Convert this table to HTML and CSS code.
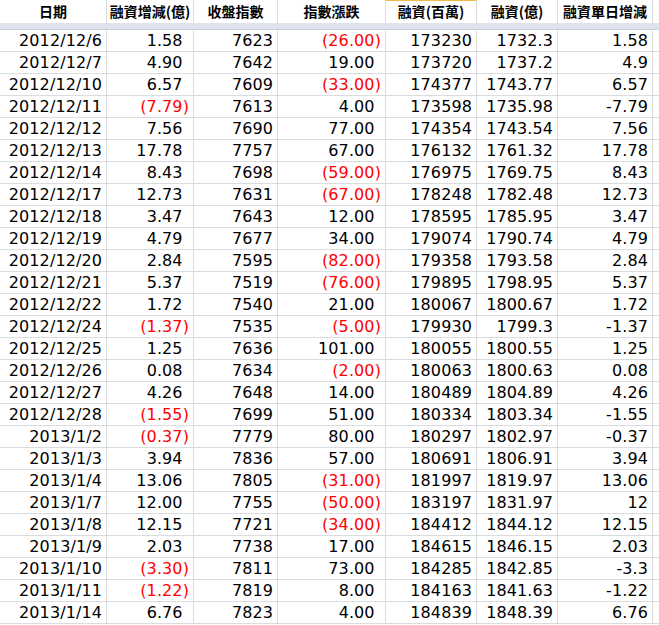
FILE: index.html
```html
<!DOCTYPE html>
<html lang="zh-Hant">
<head>
<meta charset="utf-8">
<title>融資增減</title>
<link rel="stylesheet" href="styles.css">
</head>
<body>
<div class="sheet">
  <div class="row head">
    <div class="c">日期</div>
    <div class="c">融資增減(億)</div>
    <div class="c">收盤指數</div>
    <div class="c">指數漲跌</div>
    <div class="c sel">融資(百萬)</div>
    <div class="c">融資(億)</div>
    <div class="c">融資單日增減</div>
    <div class="c fill"></div>
  </div>
  <div class="band"></div>
  <div class="body">
    <div class="row"><div class="c">2012/12/6</div><div class="c">1.58<span class="ph">)</span></div><div class="c">7623</div><div class="c neg">(26.00)</div><div class="c">173230</div><div class="c">1732.3</div><div class="c">1.58</div><div class="c fill"></div></div>
    <div class="row"><div class="c">2012/12/7</div><div class="c">4.90<span class="ph">)</span></div><div class="c">7642</div><div class="c">19.00<span class="ph">)</span></div><div class="c">173720</div><div class="c">1737.2</div><div class="c">4.9</div><div class="c fill"></div></div>
    <div class="row"><div class="c">2012/12/10</div><div class="c">6.57<span class="ph">)</span></div><div class="c">7609</div><div class="c neg">(33.00)</div><div class="c">174377</div><div class="c">1743.77</div><div class="c">6.57</div><div class="c fill"></div></div>
    <div class="row"><div class="c">2012/12/11</div><div class="c neg">(7.79)</div><div class="c">7613</div><div class="c">4.00<span class="ph">)</span></div><div class="c">173598</div><div class="c">1735.98</div><div class="c">-7.79</div><div class="c fill"></div></div>
    <div class="row"><div class="c">2012/12/12</div><div class="c">7.56<span class="ph">)</span></div><div class="c">7690</div><div class="c">77.00<span class="ph">)</span></div><div class="c">174354</div><div class="c">1743.54</div><div class="c">7.56</div><div class="c fill"></div></div>
    <div class="row"><div class="c">2012/12/13</div><div class="c">17.78<span class="ph">)</span></div><div class="c">7757</div><div class="c">67.00<span class="ph">)</span></div><div class="c">176132</div><div class="c">1761.32</div><div class="c">17.78</div><div class="c fill"></div></div>
    <div class="row"><div class="c">2012/12/14</div><div class="c">8.43<span class="ph">)</span></div><div class="c">7698</div><div class="c neg">(59.00)</div><div class="c">176975</div><div class="c">1769.75</div><div class="c">8.43</div><div class="c fill"></div></div>
    <div class="row"><div class="c">2012/12/17</div><div class="c">12.73<span class="ph">)</span></div><div class="c">7631</div><div class="c neg">(67.00)</div><div class="c">178248</div><div class="c">1782.48</div><div class="c">12.73</div><div class="c fill"></div></div>
    <div class="row"><div class="c">2012/12/18</div><div class="c">3.47<span class="ph">)</span></div><div class="c">7643</div><div class="c">12.00<span class="ph">)</span></div><div class="c">178595</div><div class="c">1785.95</div><div class="c">3.47</div><div class="c fill"></div></div>
    <div class="row"><div class="c">2012/12/19</div><div class="c">4.79<span class="ph">)</span></div><div class="c">7677</div><div class="c">34.00<span class="ph">)</span></div><div class="c">179074</div><div class="c">1790.74</div><div class="c">4.79</div><div class="c fill"></div></div>
    <div class="row"><div class="c">2012/12/20</div><div class="c">2.84<span class="ph">)</span></div><div class="c">7595</div><div class="c neg">(82.00)</div><div class="c">179358</div><div class="c">1793.58</div><div class="c">2.84</div><div class="c fill"></div></div>
    <div class="row"><div class="c">2012/12/21</div><div class="c">5.37<span class="ph">)</span></div><div class="c">7519</div><div class="c neg">(76.00)</div><div class="c">179895</div><div class="c">1798.95</div><div class="c">5.37</div><div class="c fill"></div></div>
    <div class="row"><div class="c">2012/12/22</div><div class="c">1.72<span class="ph">)</span></div><div class="c">7540</div><div class="c">21.00<span class="ph">)</span></div><div class="c">180067</div><div class="c">1800.67</div><div class="c">1.72</div><div class="c fill"></div></div>
    <div class="row"><div class="c">2012/12/24</div><div class="c neg">(1.37)</div><div class="c">7535</div><div class="c neg">(5.00)</div><div class="c">179930</div><div class="c">1799.3</div><div class="c">-1.37</div><div class="c fill"></div></div>
    <div class="row"><div class="c">2012/12/25</div><div class="c">1.25<span class="ph">)</span></div><div class="c">7636</div><div class="c">101.00<span class="ph">)</span></div><div class="c">180055</div><div class="c">1800.55</div><div class="c">1.25</div><div class="c fill"></div></div>
    <div class="row"><div class="c">2012/12/26</div><div class="c">0.08<span class="ph">)</span></div><div class="c">7634</div><div class="c neg">(2.00)</div><div class="c">180063</div><div class="c">1800.63</div><div class="c">0.08</div><div class="c fill"></div></div>
    <div class="row"><div class="c">2012/12/27</div><div class="c">4.26<span class="ph">)</span></div><div class="c">7648</div><div class="c">14.00<span class="ph">)</span></div><div class="c">180489</div><div class="c">1804.89</div><div class="c">4.26</div><div class="c fill"></div></div>
    <div class="row"><div class="c">2012/12/28</div><div class="c neg">(1.55)</div><div class="c">7699</div><div class="c">51.00<span class="ph">)</span></div><div class="c">180334</div><div class="c">1803.34</div><div class="c">-1.55</div><div class="c fill"></div></div>
    <div class="row"><div class="c">2013/1/2</div><div class="c neg">(0.37)</div><div class="c">7779</div><div class="c">80.00<span class="ph">)</span></div><div class="c">180297</div><div class="c">1802.97</div><div class="c">-0.37</div><div class="c fill"></div></div>
    <div class="row"><div class="c">2013/1/3</div><div class="c">3.94<span class="ph">)</span></div><div class="c">7836</div><div class="c">57.00<span class="ph">)</span></div><div class="c">180691</div><div class="c">1806.91</div><div class="c">3.94</div><div class="c fill"></div></div>
    <div class="row"><div class="c">2013/1/4</div><div class="c">13.06<span class="ph">)</span></div><div class="c">7805</div><div class="c neg">(31.00)</div><div class="c">181997</div><div class="c">1819.97</div><div class="c">13.06</div><div class="c fill"></div></div>
    <div class="row"><div class="c">2013/1/7</div><div class="c">12.00<span class="ph">)</span></div><div class="c">7755</div><div class="c neg">(50.00)</div><div class="c">183197</div><div class="c">1831.97</div><div class="c">12</div><div class="c fill"></div></div>
    <div class="row"><div class="c">2013/1/8</div><div class="c">12.15<span class="ph">)</span></div><div class="c">7721</div><div class="c neg">(34.00)</div><div class="c">184412</div><div class="c">1844.12</div><div class="c">12.15</div><div class="c fill"></div></div>
    <div class="row"><div class="c">2013/1/9</div><div class="c">2.03<span class="ph">)</span></div><div class="c">7738</div><div class="c">17.00<span class="ph">)</span></div><div class="c">184615</div><div class="c">1846.15</div><div class="c">2.03</div><div class="c fill"></div></div>
    <div class="row"><div class="c">2013/1/10</div><div class="c neg">(3.30)</div><div class="c">7811</div><div class="c">73.00<span class="ph">)</span></div><div class="c">184285</div><div class="c">1842.85</div><div class="c">-3.3</div><div class="c fill"></div></div>
    <div class="row"><div class="c">2013/1/11</div><div class="c neg">(1.22)</div><div class="c">7819</div><div class="c">8.00<span class="ph">)</span></div><div class="c">184163</div><div class="c">1841.63</div><div class="c">-1.22</div><div class="c fill"></div></div>
    <div class="row"><div class="c">2013/1/14</div><div class="c">6.76<span class="ph">)</span></div><div class="c">7823</div><div class="c">4.00<span class="ph">)</span></div><div class="c">184839</div><div class="c">1848.39</div><div class="c">6.76</div><div class="c fill"></div></div>
  </div>
</div>
</body>
</html>
```

FILE: styles.css
```css
* { box-sizing: border-box; }
html, body { margin: 0; padding: 0; background: #ffffff; }
body { width: 659px; height: 625px; overflow: hidden; }

.sheet { width: 659px; }

.row {
  display: grid;
  grid-template-columns: 107px 87px 84px 108px 91px 81px 95px 6px;
  height: 22px;
}

.c {
  border-right: 1px solid #dadcdd;
  border-bottom: 1px solid #dadcdd;
  text-align: right;
  padding-right: 4px;
  font-family: "DejaVu Sans", Verdana, sans-serif;
  font-size: 16px;
  letter-spacing: 0.1px;
  line-height: 21px;
  color: #000000;
  white-space: nowrap;
  overflow: hidden;
}
.c.fill { border-right: none; padding: 0; }

.neg { color: #ff0000; }
.ph { visibility: hidden; }

.head { height: 23px; }
.head .c {
  text-align: center;
  padding: 0;
  border-bottom: none;
  letter-spacing: 0;
  font-family: "Noto Sans CJK TC", "Noto Sans CJK SC", sans-serif;
  font-weight: bold;
  font-size: 14px;
  line-height: 23px;
}
.head .c.sel { border-top: 1px solid #f2b94b; line-height: 21px; }

.band {
  height: 7px;
  background: #dfe3ee;
  border-bottom: 1px solid #c8cedc;
}
```
